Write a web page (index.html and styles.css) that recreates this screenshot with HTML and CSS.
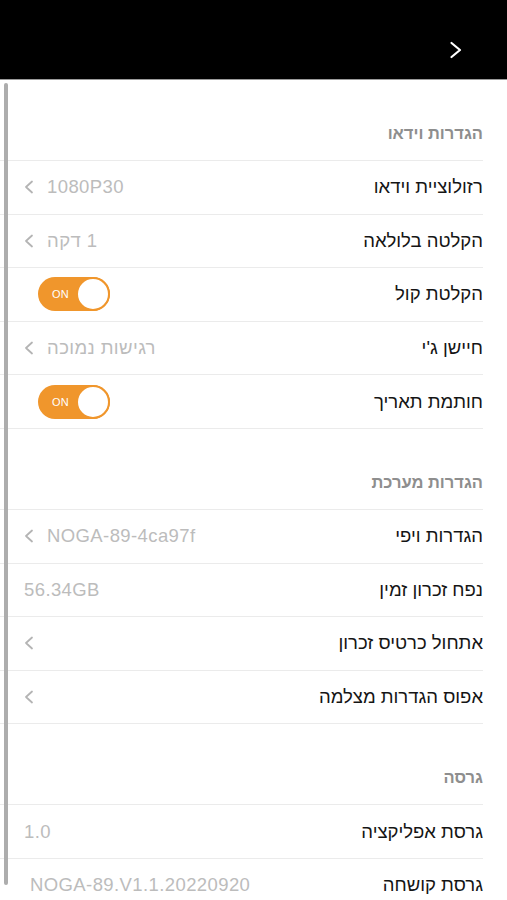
FILE: index.html
```html
<!DOCTYPE html>
<html lang="he" dir="rtl">
<head>
    <meta charset="UTF-8">
    <meta name="viewport" content="width=device-width, initial-scale=1.0">
    <title>הגדרות מצלמה</title>
    <link rel="stylesheet" href="styles.css">
</head>
<body>
    <header class="topbar">
        <button class="back" aria-label="חזרה">
            <svg width="14" height="18" viewBox="0 0 14 18"><polyline points="2.5,2 11,9 2.5,16" fill="none" stroke="#fff" stroke-width="2.2" stroke-linecap="round" stroke-linejoin="round"/></svg>
        </button>
    </header>

    <main class="settings">
        <div class="scroll-indicator"></div>

        <section class="group">
            <h2 class="group-title">הגדרות וידאו</h2>
            <div class="row">
                <span class="label">רזולוציית וידאו</span>
                <span class="value"><span>1080P30</span><svg class="chev" width="10" height="14" viewBox="0 0 10 14"><polyline points="8,1.5 2,7 8,12.5"/></svg></span>
            </div>
            <div class="row">
                <span class="label">הקלטה בלולאה</span>
                <span class="value"><span>1 דקה</span><svg class="chev" width="10" height="14" viewBox="0 0 10 14"><polyline points="8,1.5 2,7 8,12.5"/></svg></span>
            </div>
            <div class="row">
                <span class="label">הקלטת קול</span>
                <span class="toggle on"><span class="toggle-text">ON</span><span class="knob"></span></span>
            </div>
            <div class="row">
                <span class="label">חיישן ג'י</span>
                <span class="value"><span>רגישות נמוכה</span><svg class="chev" width="10" height="14" viewBox="0 0 10 14"><polyline points="8,1.5 2,7 8,12.5"/></svg></span>
            </div>
            <div class="row">
                <span class="label">חותמת תאריך</span>
                <span class="toggle on"><span class="toggle-text">ON</span><span class="knob"></span></span>
            </div>
        </section>

        <section class="group">
            <h2 class="group-title">הגדרות מערכת</h2>
            <div class="row">
                <span class="label">הגדרות ויפי</span>
                <span class="value"><span>NOGA-89-4ca97f</span><svg class="chev" width="10" height="14" viewBox="0 0 10 14"><polyline points="8,1.5 2,7 8,12.5"/></svg></span>
            </div>
            <div class="row">
                <span class="label">נפח זכרון זמין</span>
                <span class="value"><span>56.34GB</span></span>
            </div>
            <div class="row">
                <span class="label">אתחול כרטיס זכרון</span>
                <span class="value"><svg class="chev" width="10" height="14" viewBox="0 0 10 14"><polyline points="8,1.5 2,7 8,12.5"/></svg></span>
            </div>
            <div class="row">
                <span class="label">אפוס הגדרות מצלמה</span>
                <span class="value"><svg class="chev" width="10" height="14" viewBox="0 0 10 14"><polyline points="8,1.5 2,7 8,12.5"/></svg></span>
            </div>
        </section>

        <section class="group">
            <h2 class="group-title">גרסה</h2>
            <div class="row">
                <span class="label">גרסת אפליקציה</span>
                <span class="value"><span>1.0</span></span>
            </div>
            <div class="row">
                <span class="label">גרסת קושחה</span>
                <span class="value firmware"><span>NOGA-89.V1.1.20220920</span></span>
            </div>
        </section>
    </main>
</body>
</html>
```

FILE: styles.css
```css
* {
    box-sizing: border-box;
}

body {
    margin: 0;
    background-color: #fff;
    color: #1a1a1a;
    font-family: "Liberation Sans", "DejaVu Sans", Arial, sans-serif;
    overflow: hidden;
}

.topbar {
    height: 80px;
    background-color: #000;
    border-bottom: 1px solid #9a9a9a;
    display: flex;
    align-items: flex-start;
    padding-right: 44px;
    padding-top: 41px;
}

.back {
    background: none;
    border: none;
    padding: 0;
    width: 14px;
    height: 18px;
    cursor: pointer;
}

.back svg {
    display: block;
}

.settings {
    position: relative;
}

/* scrollbar indicator on the left edge */
.scroll-indicator {
    position: absolute;
    left: 4px;
    top: 3px;
    width: 4px;
    height: 802px;
    background-color: #adadad;
    border-radius: 2px;
}

.group-title {
    margin: 0 24px 0 0;
    height: 81px;
    padding-bottom: 17px;
    display: flex;
    align-items: flex-end;
    font-size: 16.5px;
    line-height: 20px;
    font-weight: bold;
    color: #8e8e8e;
    border-bottom: 1px solid #ebebeb;
}

.row {
    height: 53.6px;
    margin-right: 24px;
    padding-left: 24px;
    display: flex;
    align-items: center;
    justify-content: space-between;
    border-bottom: 1px solid #ebebeb;
}

.label {
    font-size: 18.5px;
    color: #151515;
}

.value {
    display: flex;
    align-items: center;
    gap: 13px;
    font-size: 18.5px;
    letter-spacing: 0.4px;
    color: #bcbcbc;
}

.value.firmware {
    padding-left: 6px;
}

.chev {
    display: block;
    fill: none;
    stroke: #b4b4b4;
    stroke-width: 1.8;
    stroke-linecap: round;
    stroke-linejoin: round;
}

.toggle {
    width: 72px;
    height: 34px;
    margin-left: 14px;
    border-radius: 17px;
    background-color: #f0962c;
    display: flex;
    align-items: center;
    justify-content: space-between;
    direction: ltr;
    padding-left: 14px;
}

.toggle-text {
    font-size: 11px;
    color: #fff;
    letter-spacing: 0.3px;
}

.knob {
    width: 34px;
    height: 34px;
    border-radius: 50%;
    background-color: #fff;
    border: 2px solid #f0962c;
}
```
